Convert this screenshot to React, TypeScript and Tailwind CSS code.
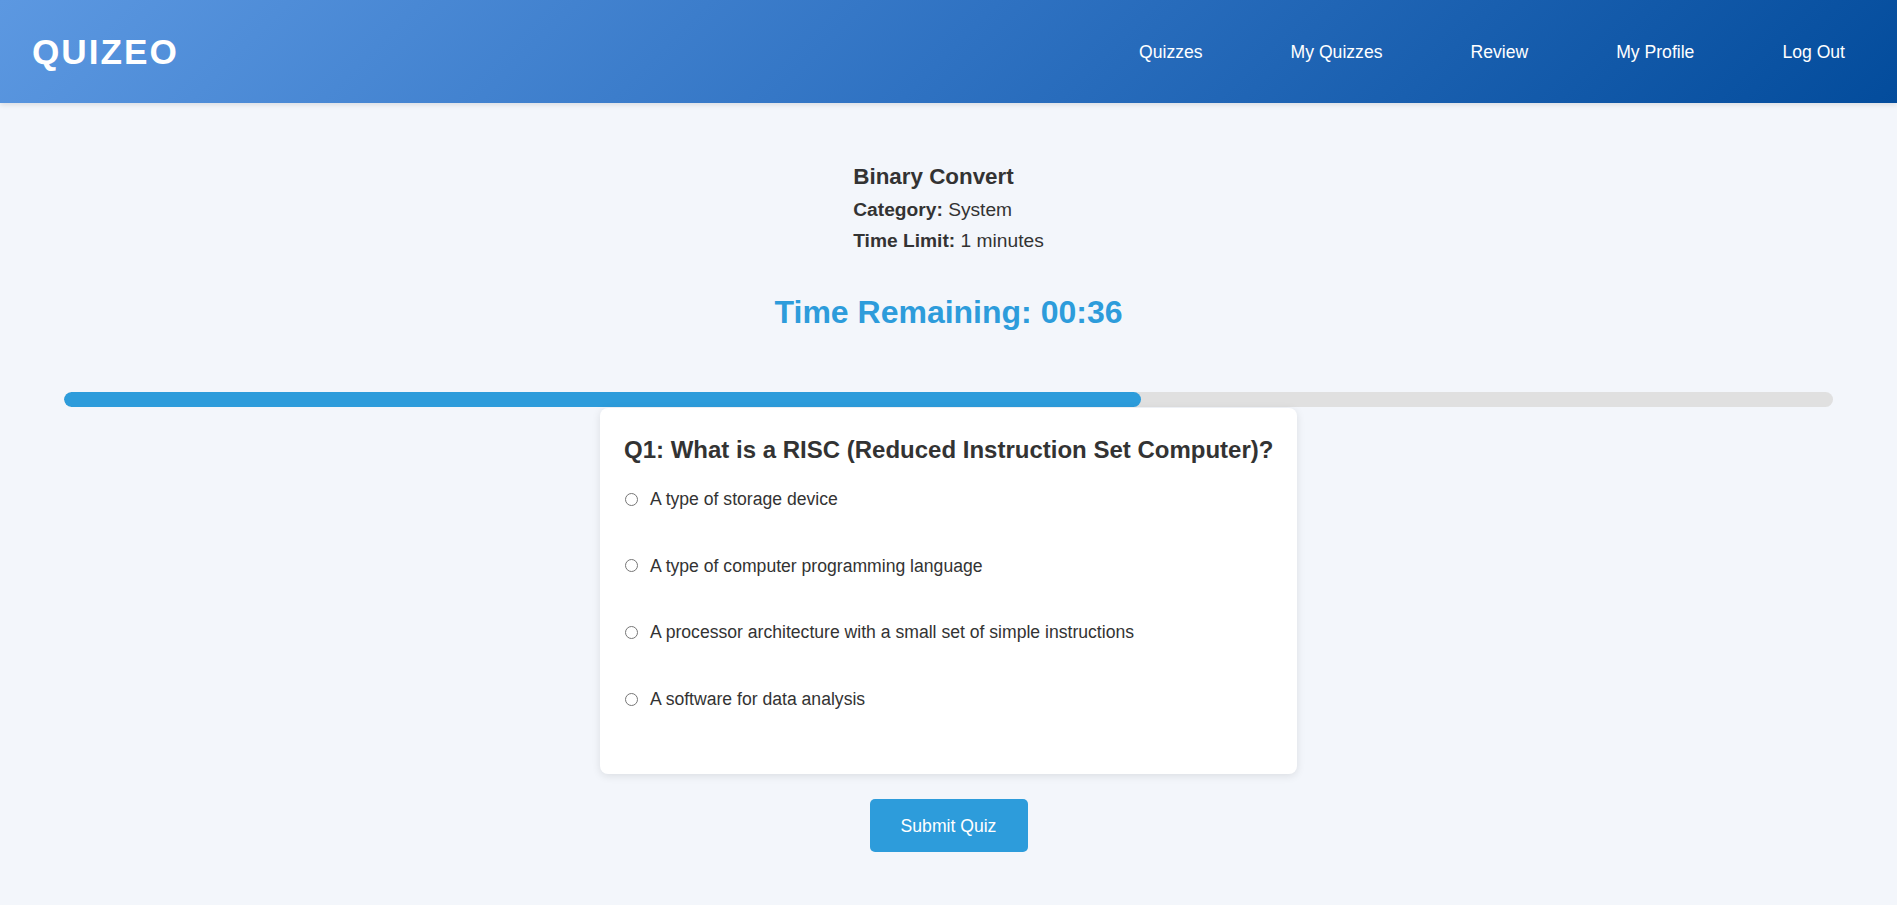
import React from "react";

const options = [
  "A type of storage device",
  "A type of computer programming language",
  "A processor architecture with a small set of simple instructions",
  "A software for data analysis",
];

export default function App() {
  return (
    <div className="min-h-[905px] bg-[#f3f6fb] text-[#333] font-['Liberation_Sans',Arial,sans-serif]">
      <header className="h-[103px] flex items-center justify-between pl-[32px] pr-[52px] bg-[linear-gradient(135deg,#5c98e1_0%,#2f72c2_50%,#034c9c_100%)] shadow-[0_2px_5px_rgba(0,0,0,0.1)]">
        <div className="text-white font-bold text-[35.2px] tracking-[2px] leading-none">QUIZEO</div>
        <nav className="flex items-center gap-[88px] text-white text-[17.6px] leading-[20px]">
          <a href="#">Quizzes</a>
          <a href="#">My Quizzes</a>
          <a href="#">Review</a>
          <a href="#">My Profile</a>
          <a href="#">Log Out</a>
        </nav>
      </header>

      <main className="flex flex-col items-center px-16">
        <div className="mt-[61px] text-left">
          <h2 className="font-bold text-[22.4px] leading-[26px]">Binary Convert</h2>
          <p className="mt-[9px] text-[19.2px] leading-[22px]">
            <span className="font-bold">Category:</span> System
          </p>
          <p className="mt-[9px] text-[19.2px] leading-[22px]">
            <span className="font-bold">Time Limit:</span> 1 minutes
          </p>
        </div>

        <div className="mt-[42px] text-[#2d9cdb] font-bold text-[32px] leading-[37px]">
          Time Remaining: 00:36
        </div>

        <div className="mt-[61px] w-full h-[15px] rounded-full bg-[#e0e0e0] overflow-hidden">
          <div className="h-full w-[60.9%] rounded-full bg-[#2d9cdb]" />
        </div>

        <div className="mt-[1px] w-[697px] bg-white rounded-[8px] shadow-[0_2px_8px_rgba(0,0,0,0.1)] px-[24px] pt-[28px] pb-[65px]">
          <h3 className="font-bold text-[24px] leading-[28px] mb-[25px] whitespace-nowrap">
            Q1: What is a RISC (Reduced Instruction Set Computer)?
          </h3>
          <div className="flex flex-col gap-[46.7px]">
            {options.map((o) => (
              <label key={o} className="flex items-center h-[20px] text-[17.6px] leading-[20px]">
                <input type="radio" name="q1" className="m-0 ml-[1px] mr-[12px] w-[13px] h-[13px]" />
                <span>{o}</span>
              </label>
            ))}
          </div>
        </div>

        <button className="mt-[25px] w-[158px] h-[53px] rounded-[5px] bg-[#2d9cdb] text-white text-[17.6px] leading-[20px]">
          Submit Quiz
        </button>
      </main>
    </div>
  );
}
